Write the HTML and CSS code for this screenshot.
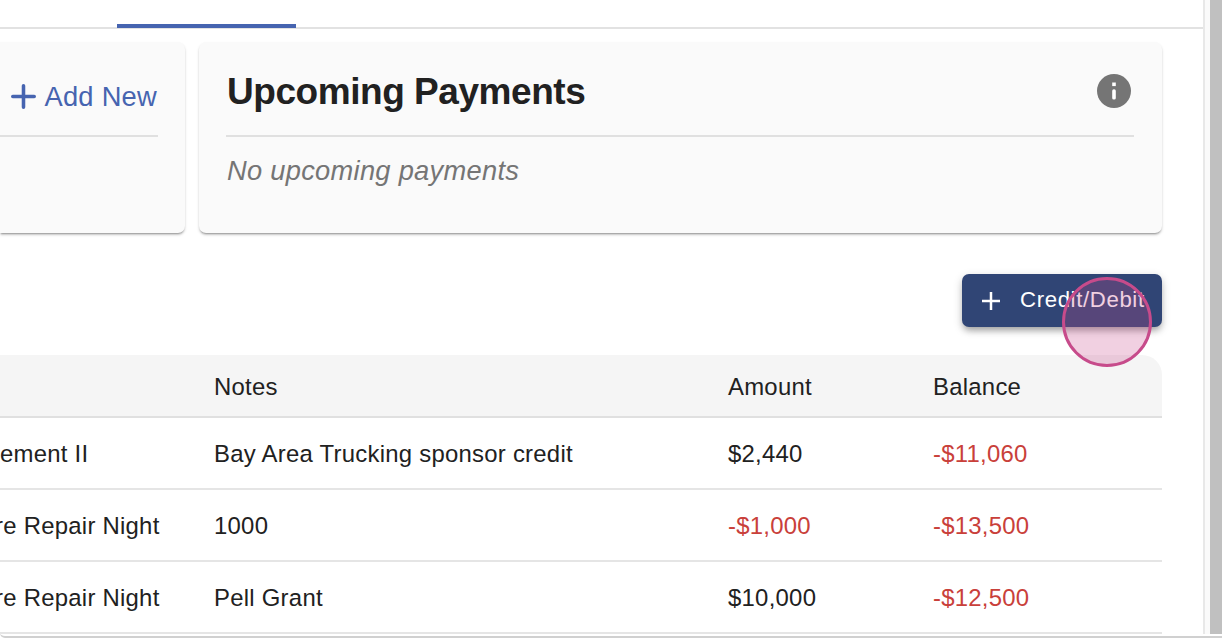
FILE: index.html
```html
<!DOCTYPE html>
<html lang="en">
<head>
<meta charset="utf-8">
<title>Payments</title>
<link rel="stylesheet" href="styles.css">
</head>
<body>
<div class="window">
  <div class="viewport">
    <main class="page">
      <nav class="tabs"><span class="tab-indicator"></span></nav>
      <section class="cards">
        <article class="card card-plans">
          <header class="card-head">
            <a class="add-new"><svg class="add-icon" viewBox="0 0 24 24"><path d="M12 1.7v20.6M1.7 12h20.6" fill="none" stroke="currentColor" stroke-width="3.4" stroke-linecap="round"/></svg><span>Add New</span></a>
          </header>
        </article>
        <article class="card card-upcoming">
          <header class="card-head">
            <h2 class="card-title">Upcoming Payments</h2>
            <svg class="info-icon" viewBox="0 0 34 34"><circle cx="17" cy="17" r="17" fill="#757575"/><path d="M15.2 8.5h3.6v3.6h-3.6z" fill="#fff"/><rect x="15.2" y="15.3" width="3.6" height="10.2" rx="1.6" fill="#fff"/></svg>
          </header>
          <p class="empty">No upcoming payments</p>
        </article>
      </section>
      <div class="actions">
        <button class="credit-button"><svg class="plus-icon" viewBox="0 0 18 18"><path d="M9 0v18M0 9h18" fill="none" stroke="currentColor" stroke-width="2.5"/></svg><span class="credit-label">Credit/Debit</span><i class="click-marker"></i></button>
      </div>
      <div class="ledger">
        <div class="row row-head"><span></span><span>Notes</span><span>Amount</span><span>Balance</span></div>
        <div class="row"><span class="course">ement II</span><span>Bay Area Trucking sponsor credit</span><span>$2,440</span><span class="negative">-$11,060</span></div>
        <div class="row"><span class="course course-clipped">re Repair Night</span><span>1000</span><span class="negative">-$1,000</span><span class="negative">-$13,500</span></div>
        <div class="row"><span class="course course-clipped">re Repair Night</span><span>Pell Grant</span><span>$10,000</span><span class="negative">-$12,500</span></div>
      </div>
    </main>
    <aside class="scrollbar"><div class="thumb"></div></aside>
  </div>
</div>
</body>
</html>
```
FILE: styles.css
```css
* { box-sizing: border-box; }
body {
  margin: 0;
  background: #fff;
  color: #212121;
  font-family: "Liberation Sans", Arial, sans-serif;
}
.window {
  width: 1222px;
  height: 638px;
  overflow: hidden;
  border-bottom: 2px solid #d0d0d0;
  border-bottom-left-radius: 5px;
}
.viewport { display: flex; height: 634px; overflow: hidden; }
.page { width: 1203px; height: 634px; overflow: hidden; }
.tabs {
  height: 29px;
  padding: 24px 0 0 117px;
  border-bottom: 2px solid #e2e2e2;
}
.tab-indicator { display: block; width: 179px; height: 4px; background: #4664b0; }
.cards {
  display: grid;
  grid-template-columns: 185px 963px;
  gap: 14px;
  padding-top: 13px;
}
.card {
  height: 191px;
  border-radius: 7px;
  background: #fafafa;
  box-shadow: 0 2px 2px -1px rgba(0, 0, 0, .32), 0 2px 3px rgba(0, 0, 0, .15);
}
.card-plans { border-radius: 0 7px 7px 0; padding-right: 27px; }
.card-upcoming { padding: 0 28px 0 27px; }
.card-head {
  display: flex;
  align-items: center;
  justify-content: space-between;
  height: 95px;
  border-bottom: 2px solid #e0e0e0;
}
.card-plans .card-head { justify-content: flex-end; padding-top: 16px; }
.add-new {
  display: flex;
  align-items: center;
  gap: 8px;
  margin-right: 1px;
  color: #4664b0;
  font-size: 27.3px;
  letter-spacing: .25px;
  white-space: nowrap;
}
.add-icon { width: 25px; height: 25px; }
.card-title {
  margin: 6px 0 0 1px;
  font-size: 37px;
  line-height: 48px;
  letter-spacing: -.45px;
  white-space: nowrap;
}
.info-icon { width: 34px; height: 34px; margin: 4px 3px 0 0; }
.empty {
  margin: 18px 0 0 1px;
  color: #757575;
  font-size: 27.3px;
  line-height: 32px;
  letter-spacing: .27px;
  font-style: italic;
}
.actions { display: flex; justify-content: flex-end; padding: 41px 41px 28px 0; }
.credit-button {
  position: relative;
  display: flex;
  align-items: center;
  gap: 20px;
  width: 200px;
  height: 53px;
  padding: 0 0 0 20px;
  border: 0;
  border-radius: 7px;
  background: #304575;
  box-shadow: 0 5px 6px -2px rgba(0, 0, 0, .25), 0 3px 10px rgba(0, 0, 0, .2);
  color: #fff;
  font: 22.2px "Liberation Sans", Arial, sans-serif;
  letter-spacing: .63px;
  white-space: nowrap;
}
.credit-label { padding-bottom: 2px; }
.plus-icon { width: 18px; height: 18px; }
.click-marker {
  position: absolute;
  left: 100px;
  top: 3px;
  width: 90px;
  height: 90px;
  border: 3px solid #c74b8b;
  border-radius: 50%;
  background: rgba(199, 75, 139, .26);
}
.ledger { width: 1162px; }
.row {
  display: grid;
  grid-template-columns: 214px 514px 205px 229px;
  align-items: center;
  height: 72px;
  padding-top: 2px;
  border-bottom: 2px solid #e5e5e5;
  font-size: 23.9px;
  letter-spacing: .26px;
  white-space: nowrap;
}
.row-head {
  height: 63px;
  border-bottom-color: #e0e0e0;
  border-radius: 0 20px 0 0;
  background: #f5f5f5;
}
/* The first column continues past the left edge of the page. */
.course-clipped { margin-left: -5px; }
.negative { color: #c9403a; }
.scrollbar {
  width: 19px;
  padding-left: 5px;
  border-left: 2px solid #e8e8e8;
  background: #fafafa;
}
.thumb { height: 634px; background: #c0c0c0; }
```
